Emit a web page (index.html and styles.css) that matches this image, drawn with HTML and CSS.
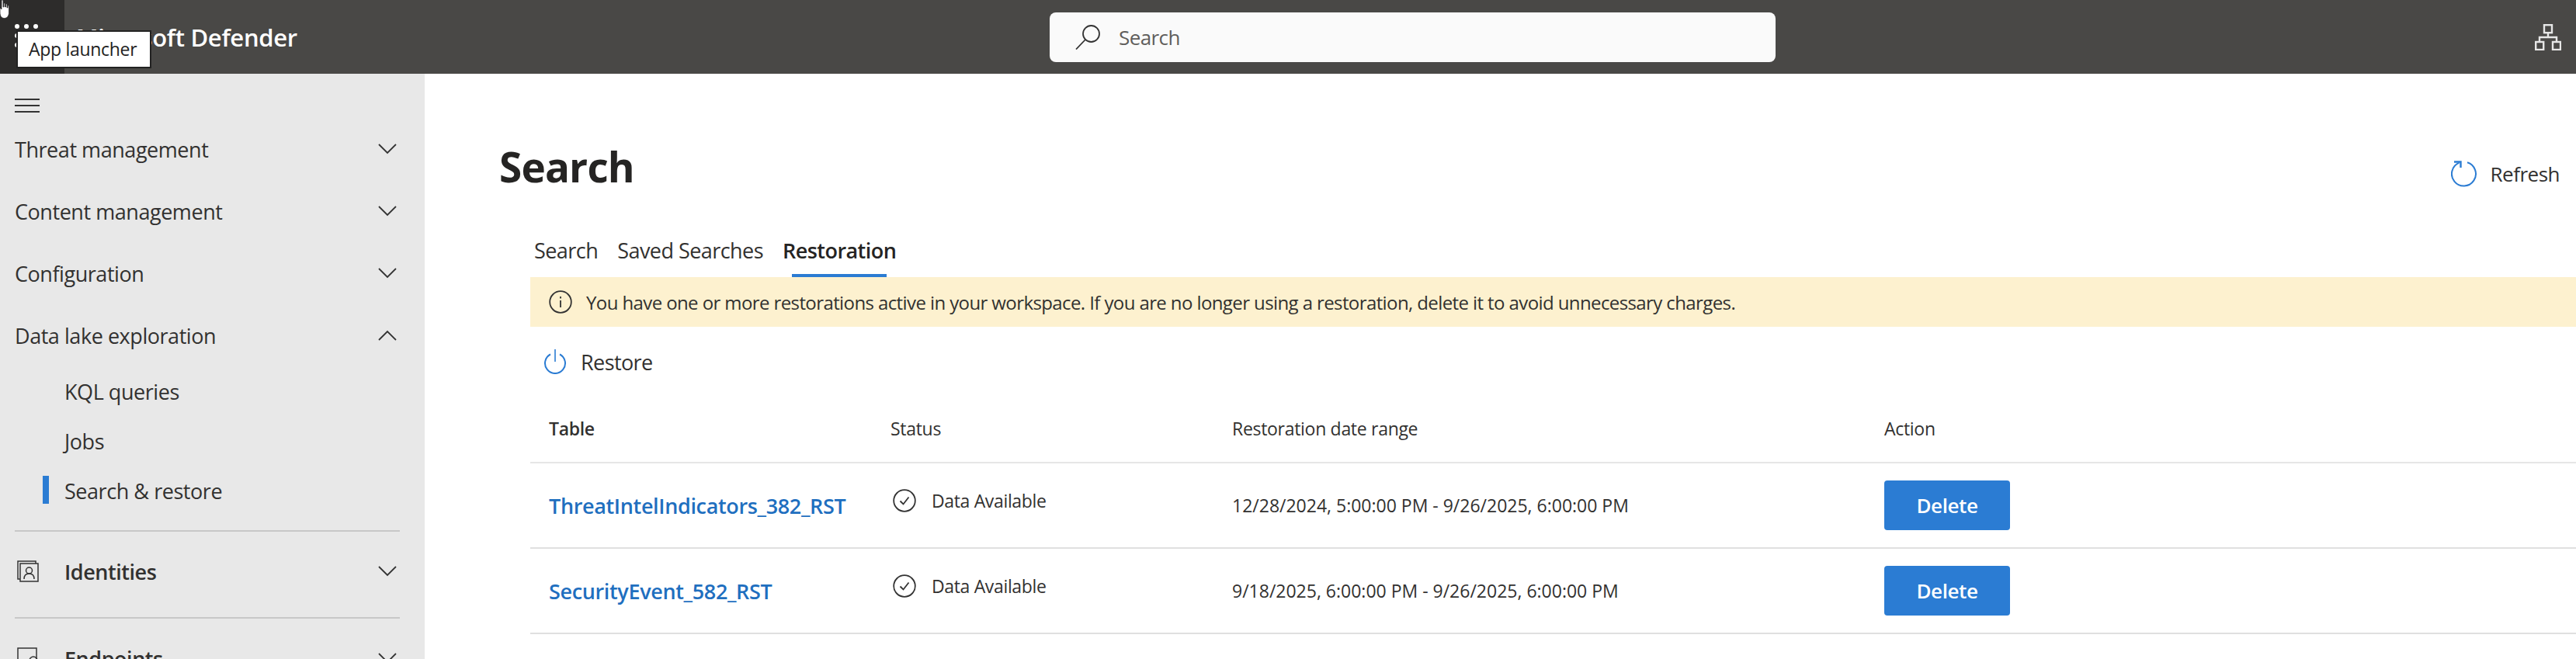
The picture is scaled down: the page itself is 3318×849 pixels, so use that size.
FILE: index.html
```html
<!DOCTYPE html>
<html lang="en">
<head>
  <meta charset="UTF-8" />
  <title>Search - Microsoft Defender</title>
  <link rel="stylesheet" href="styles.css">
</head>
<body>
  <header class="topbar">
    <div class="launcher">
      <div class="dots">
        <i></i><i></i><i></i><i></i><i></i><i></i><i></i><i></i><i></i>
      </div>
    </div>
    <div class="brand">Microsoft Defender</div>
    <div class="searchbox">
      <svg class="search-icon" viewBox="0 0 32 32"><circle cx="20.5" cy="11.5" r="10.5" fill="none" stroke="#333" stroke-width="1.8"/><path d="M13 19 1 31.5" stroke="#333" stroke-width="1.8" fill="none"/></svg>
      <span>Search</span>
    </div>
    <svg class="org-icon" viewBox="0 0 34 34" fill="none" stroke="#e6e6e6" stroke-width="2.4"><rect x="12" y="1.2" width="10" height="10"/><rect x="1.2" y="23" width="10" height="10"/><rect x="23" y="23" width="10" height="10"/><path d="M17 11v6M6 23v-6h22v6"/></svg>
  </header>

  <div class="tooltip">App launcher</div>
  <svg class="pointer" viewBox="0 0 12 24"><path d="M2 0h2v9h1V4h1.500v5h1V5h1.500v5h1V7h1.500v9c0 4-2 7.500-6 7.500S0 20 0 16V10l2 2z" fill="#fff" stroke="#222" stroke-width=".7"/></svg>

  <div class="layout">
    <nav class="sidebar">
      <div class="hamburger"><i></i><i></i><i></i></div>
      <a class="nav-item"><span>Threat management</span><svg class="chev" viewBox="0 0 24 14"><path d="M1 1l11 11L23 1"/></svg></a>
      <a class="nav-item"><span>Content management</span><svg class="chev" viewBox="0 0 24 14"><path d="M1 1l11 11L23 1"/></svg></a>
      <a class="nav-item"><span>Configuration</span><svg class="chev" viewBox="0 0 24 14"><path d="M1 1l11 11L23 1"/></svg></a>
      <a class="nav-item"><span>Data lake exploration</span><svg class="chev" viewBox="0 0 24 14"><path d="M1 13 12 2l11 11"/></svg></a>
      <a class="sub-item">KQL queries</a>
      <a class="sub-item">Jobs</a>
      <a class="sub-item active">Search &amp; restore</a>
      <div class="nav-divider"></div>
      <a class="nav-item section">
        <svg class="section-icon" viewBox="0 0 28 28" fill="none" stroke="#333" stroke-width="1.500"><path d="M24 4V1H1v23h3"/><rect x="4" y="4" width="23" height="23"/><circle cx="15.500" cy="13" r="4"/><path d="M9 24c0-5 3-7 6.500-7s6.500 2 6.500 7"/></svg>
        <span>Identities</span>
        <svg class="chev" viewBox="0 0 24 14"><path d="M1 1l11 11L23 1"/></svg>
      </a>
      <div class="nav-divider"></div>
      <a class="nav-item section">
        <svg class="section-icon" viewBox="0 0 28 28" fill="none" stroke="#333" stroke-width="1.500"><path d="M1 24V1h24v23"/><circle cx="21" cy="17" r="5"/></svg>
        <span>Endpoints</span>
        <svg class="chev" viewBox="0 0 24 14"><path d="M1 1l11 11L23 1"/></svg>
      </a>
    </nav>

    <main class="content">
      <div class="page-head">
        <h1>Search</h1>
        <button class="refresh">
          <svg viewBox="0 0 34 34" fill="none" stroke="#2b7cd3" stroke-width="2"><path d="M21 2.200A15.500 15.500 0 1 1 10.500 2.700"/><path d="M4 1.500h8.500V9" stroke-width="2.400"/></svg>
          Refresh
        </button>
      </div>

      <div class="panel">
        <div class="tabs">
          <a class="tab">Search</a>
          <a class="tab">Saved Searches</a>
          <a class="tab current">Restoration</a>
        </div>
        <div class="banner">
          <svg viewBox="0 0 30 30" fill="none" stroke="#333" stroke-width="1.800"><circle cx="15" cy="15" r="13.800"/><path d="M15 13v9M15 8v2.400"/></svg>
          You have one or more restorations active in your workspace. If you are no longer using a restoration, delete it to avoid unnecessary charges.
        </div>
        <div class="toolbar">
          <svg viewBox="0 0 30 32" fill="none" stroke="#2b7cd3" stroke-width="2"><path d="M9 6.500a13 13 0 1 0 12 0"/><path d="M15 0v16" stroke-width="1.600"/></svg>
          Restore
        </div>
        <table class="grid">
          <thead>
            <tr>
              <th class="col-name">Table</th>
              <th class="col-status">Status</th>
              <th class="col-range">Restoration date range</th>
              <th>Action</th>
            </tr>
          </thead>
          <tbody>
            <tr>
              <td><a class="table-link">ThreatIntelIndicators_382_RST</a></td>
              <td>
                <div class="status">
                  <svg viewBox="0 0 30 30" fill="none" stroke="#333" stroke-width="1.800"><circle cx="15" cy="15" r="13.800"/><path d="M9.500 15.500l4 4 7-9"/></svg>
                  Data Available
                </div>
              </td>
              <td class="range">12/28/2024, 5:00:00 PM - 9/26/2025, 6:00:00 PM</td>
              <td><button class="delete">Delete</button></td>
            </tr>
            <tr>
              <td><a class="table-link">SecurityEvent_582_RST</a></td>
              <td>
                <div class="status">
                  <svg viewBox="0 0 30 30" fill="none" stroke="#333" stroke-width="1.800"><circle cx="15" cy="15" r="13.800"/><path d="M9.500 15.500l4 4 7-9"/></svg>
                  Data Available
                </div>
              </td>
              <td class="range">9/18/2025, 6:00:00 PM - 9/26/2025, 6:00:00 PM</td>
              <td><button class="delete">Delete</button></td>
            </tr>
          </tbody>
        </table>
      </div>
    </main>
  </div>
</body>
</html>
```

FILE: styles.css
```css
* {
  box-sizing: border-box;
}
html, body {
  margin: 0;
  height: 849px;
  overflow: hidden;
}
body {
  font-family: "Open Sans", "Noto Sans", sans-serif;
  color: #323130;
  background: #fff;
  position: relative;
}

/* top bar */
.topbar {
  height: 95px;
  background: #494846;
  display: flex;
  align-items: center;
  position: relative;
}
.launcher {
  width: 83px;
  height: 95px;
  background: #2d2c2b;
  padding: 31px 0 0 19px;
}
.dots {
  display: grid;
  grid-template-columns: repeat(3, 6px);
  gap: 6px;
}
.dots i {
  width: 6px;
  height: 6px;
  border-radius: 50%;
  background: #fff;
}
.brand {
  color: #fff;
  font-size: 31px;
  font-weight: 600;
  margin-left: 15px;
  letter-spacing: -0.3px;
  width: 1254px;
  flex: none;
}
.searchbox {
  width: 935px;
  height: 64px;
  background: #fafafa;
  border-radius: 8px;
  display: flex;
  align-items: center;
  padding-left: 33px;
  gap: 24px;
  font-size: 26px;
  color: #605e5c;
  letter-spacing: -0.6px;
}
.search-icon {
  width: 32px;
  height: 32px;
}
.org-icon {
  width: 34px;
  height: 34px;
  margin-left: auto;
  margin-right: 19px;
}

/* overlays */
.tooltip {
  position: absolute;
  left: 21px;
  top: 39px;
  width: 174px;
  height: 49px;
  background: #fff;
  border: 2px solid #222;
  font-size: 23px;
  line-height: 44px;
  padding-left: 14px;
  color: #222;
  letter-spacing: -0.3px;
  z-index: 5;
}
.pointer {
  position: absolute;
  left: 0;
  top: 0;
  width: 12px;
  height: 24px;
  z-index: 6;
}

.layout {
  display: flex;
  height: 754px;
}

/* left nav */
.sidebar {
  width: 547px;
  flex: none;
  background: #e8e8e8;
  padding: 32px 32px 0 19px;
  overflow: hidden;
}
.hamburger {
  width: 32px;
  height: 18px;
  display: flex;
  flex-direction: column;
  justify-content: space-between;
  margin-bottom: 8px;
}
.hamburger i {
  height: 2px;
  background: #333;
}
.nav-item {
  display: flex;
  align-items: center;
  justify-content: space-between;
  height: 80px;
  font-size: 27px;
  letter-spacing: -0.45px;
  padding: 0 4px 2px 0;
}
.nav-item.section {
  justify-content: flex-start;
  font-weight: 600;
}
.nav-item.section span {
  flex: 1;
}
.section-icon {
  width: 28px;
  height: 28px;
  margin: 0 33px 0 3px;
}
.chev {
  width: 24px;
  height: 14px;
  fill: none;
  stroke: #333;
  stroke-width: 1.8;
}
.sub-item {
  display: flex;
  align-items: center;
  height: 64px;
  font-size: 27px;
  letter-spacing: -0.45px;
  padding: 0 0 2px 64px;
  position: relative;
}
.sub-item.active::before {
  content: "";
  position: absolute;
  left: 36px;
  top: 12px;
  width: 8px;
  height: 36px;
  background: #2b7cd3;
}
.nav-divider {
  height: 2px;
  background: #c8c8c8;
  margin: 18px 0 12px;
}

/* main area */
.content {
  flex: 1;
  min-width: 0;
}
.page-head {
  display: flex;
  justify-content: space-between;
  padding: 0 21px 0 96px;
  height: 195px;
}
.page-head h1 {
  margin: 84px 0 0;
  font-size: 53px;
  line-height: 72px;
  font-weight: 700;
  color: #252423;
  letter-spacing: -0.8px;
}
.refresh {
  background: none;
  border: none;
  padding: 0;
  margin-top: 112px;
  height: 34px;
  display: flex;
  align-items: center;
  gap: 17px;
  font: inherit;
  font-size: 26px;
  letter-spacing: -0.5px;
  color: #323130;
}
.refresh svg {
  width: 34px;
  height: 34px;
}
.panel {
  margin-left: 136px;
}
.tabs {
  height: 67px;
  display: flex;
  padding-left: 5px;
  gap: 25px;
  font-size: 27px;
  letter-spacing: -0.55px;
}
.tab {
  padding-top: 14px;
  position: relative;
}
.tab.current {
  font-weight: 600;
  color: #252423;
}
.tab.current::after {
  content: "";
  position: absolute;
  left: 12px;
  right: 12px;
  bottom: 0;
  height: 4px;
  background: #2b7cd3;
}
.banner {
  height: 64px;
  background: #fdf1cf;
  display: flex;
  align-items: center;
  padding-left: 24px;
  gap: 18px;
  font-size: 24px;
  letter-spacing: -0.6px;
}
.banner svg {
  width: 30px;
  height: 30px;
}
.toolbar {
  height: 90px;
  display: flex;
  align-items: center;
  padding-left: 17px;
  gap: 18px;
  font-size: 27px;
  letter-spacing: -0.6px;
}
.toolbar svg {
  width: 30px;
  height: 32px;
}
.grid {
  width: 100%;
  border-collapse: collapse;
  table-layout: fixed;
}
.grid th {
  height: 85px;
  text-align: left;
  font-weight: 400;
  font-size: 23px;
  letter-spacing: -0.3px;
  padding: 0 0 2px;
  border-bottom: 2px solid #e6e6e6;
}
.grid th:first-child {
  font-weight: 600;
}
.grid th:first-child,
.grid td:first-child {
  padding-left: 24px;
}
.col-name {
  width: 464px;
}
.col-status {
  width: 440px;
}
.col-range {
  width: 840px;
}
.grid td {
  height: 110px;
  padding: 0;
  border-bottom: 2px solid #e0e0e0;
}
.table-link {
  color: #1f6fbf;
  font-size: 27px;
  font-weight: 600;
  letter-spacing: -0.35px;
}
.status {
  display: flex;
  align-items: center;
  gap: 20px;
  padding-left: 3px;
  margin-bottom: 12px;
  font-size: 23px;
  letter-spacing: -0.35px;
}
.status svg {
  width: 30px;
  height: 30px;
}
.range {
  font-size: 23px;
  letter-spacing: 0;
}
.delete {
  width: 162px;
  height: 64px;
  background: #2b7cd3;
  color: #fff;
  border: none;
  border-radius: 4px;
  font: inherit;
  font-size: 26px;
  font-weight: 600;
  letter-spacing: -0.4px;
}
```
